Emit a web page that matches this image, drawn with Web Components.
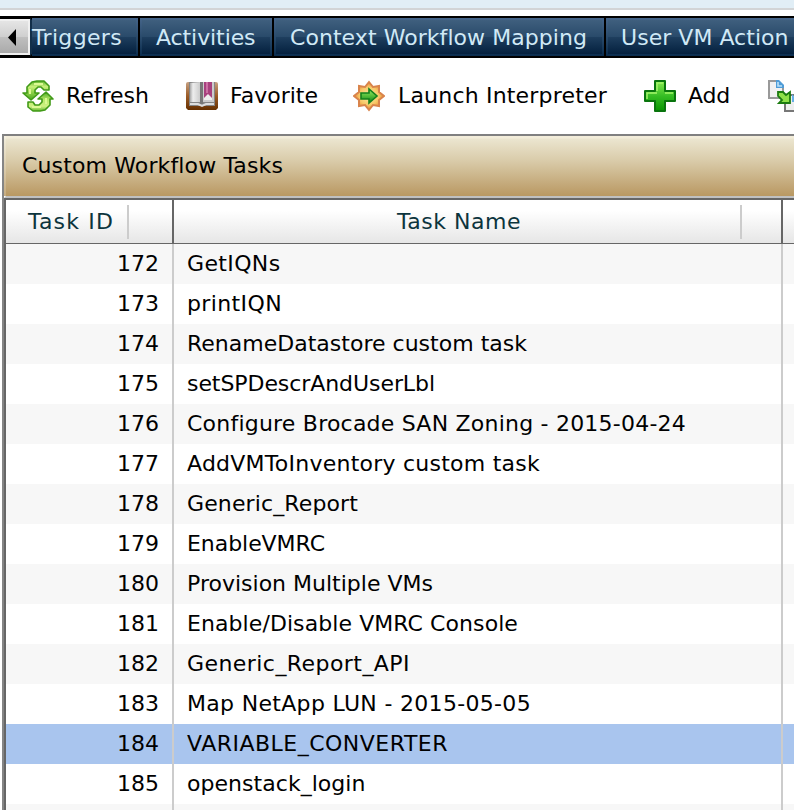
<!DOCTYPE html>
<html lang="en"><head><meta charset="utf-8"><title>Custom Workflow Tasks</title>
<style>html,body{margin:0;height:100%;overflow:hidden;background:#fff}</style></head><body>
<workflow-page></workflow-page>
<script>
// Single-line label whose tracking is adjusted to occupy the given width.
class FitLabel extends HTMLElement{
 connectedCallback(){
  const r=this.attachShadow({mode:'open'});
  r.innerHTML='<style>:host{display:inline-block;white-space:pre;line-height:30px;flex:none}span{display:inline-block}</style><span></span>';
  const s=r.querySelector('span');s.textContent=this.getAttribute('text');
  const w=+this.getAttribute('w');
  if(w){s.style.letterSpacing=((w-s.getBoundingClientRect().width)/s.textContent.length)+'px';this.style.width=w+'px';}
 }}
class ToolIcon extends HTMLElement{
 connectedCallback(){
  const art={
  refresh:`<defs><linearGradient id="g" x2="0" y2="1"><stop stop-color="#5fb52d"/><stop offset=".3" stop-color="#c9f07a"/><stop offset=".6" stop-color="#8fd24a"/><stop offset="1" stop-color="#4ca823"/></linearGradient><linearGradient id="h" x2="0" y2="1"><stop stop-color="#4ca823"/><stop offset=".4" stop-color="#b5e868"/><stop offset=".75" stop-color="#d0f283"/><stop offset="1" stop-color="#62b82f"/></linearGradient></defs><g stroke="#419a18" stroke-width="1.6" stroke-linejoin="round"><path fill="url(#g)" d="M5 13V7l5-5 5-1h7l5 5v4h-5l-3-3h-3l-3 3v3h4l-8 7-8-7z"/><path fill="url(#h)" d="M28 19v6l-5 5-5 1h-7l-5-4v-5h5l2 3h4l3-3v-3h-4l8-7 7 7z"/></g><path d="M12 4h9M8 9v5M24 18v6M10 27h9" fill="none" stroke="#dcf994" stroke-width="2"/>`,
  book:`<defs><linearGradient id="b" x2="0" y2="1"><stop stop-color="#c6a183"/><stop offset=".5" stop-color="#9b5b26"/><stop offset="1" stop-color="#663000"/></linearGradient><linearGradient id="p"><stop stop-color="#aaa"/><stop offset=".3" stop-color="#eee"/><stop offset="1" stop-color="#ccc"/></linearGradient></defs><path d="M0 4q0-2 2-2h28q2 0 2 2v24l-2 2H2l-2-2z" fill="url(#b)"/><path d="M3 2h26v24H3z" fill="#858585"/><path d="M4 3l10-1v20H4z" fill="url(#p)"/><path d="M17 2h11v20H17z" fill="#ccc"/><path d="M14 2h3v22h-3z" fill="#777"/><path d="M4 24h8l4 2 4-2h8" stroke="#ddd" fill="none" stroke-width="2"/><path d="M18 14h8v6h-8z" fill="#eee"/><path d="M18 2h8v16l-4-4-4 4z" fill="#a8417e"/><path d="M20 2h2v11h-2z" fill="#cb71a4"/>`,
  launch:`<defs><radialGradient id="s"><stop stop-color="#fff0a8"/><stop offset=".65" stop-color="#f6c766"/><stop offset="1" stop-color="#e78b35"/></radialGradient><linearGradient id="a" x2="0" y2="1"><stop stop-color="#9bea65"/><stop offset=".5" stop-color="#54bd3a"/><stop offset="1" stop-color="#087c17"/></linearGradient></defs><path d="M16 2l4 5 6-1v6l5 4-5 4v6l-6-1-4 5-4-5-6 1v-6l-5-4 5-4V6l6 1z" fill="url(#s)" stroke="#d9844c" stroke-width="2"/><path d="M8 13h8V9l8 7-8 7v-4H8z" fill="url(#a)" stroke="#13811c" stroke-width="1.6"/>`,
  add:`<defs><linearGradient id="g" x2="0" y2="1"><stop stop-color="#8bea51"/><stop offset=".5" stop-color="#36bd24"/><stop offset="1" stop-color="#079500"/></linearGradient></defs><path d="M11 1h10v10h10v10H21v10H11V21H1V11h10z" fill="url(#g)" stroke="#09750d" stroke-width="2" stroke-linejoin="round"/><path d="M13 11V3h6M3 19v-6h10M21 13h8" fill="none" stroke="#a3f56a" stroke-width="1.5"/>`,
  copy:`<path d="M1 1h9l5 5v12H1z" fill="#f1f1f1" stroke="#999" stroke-width="2"/><path d="M8 0h3l5 5v3H8z" fill="#4f9cd8"/><path d="M10 2v4h4" fill="none" stroke="#bce1f7" stroke-width="1.6"/><path d="M17 15h9l5 5v11H17z" fill="#eee" stroke="#777" stroke-width="2"/><path d="M24 14l7 8h-7z" fill="#64aee7"/><path d="M10 12h5l3 3 4-3v11H11l3-3-4-4z" fill="#8fe048" stroke="#1b7b10" stroke-width="1.8"/>`};
  this.attachShadow({mode:'open'}).innerHTML=`<style>:host{display:block;width:32px;height:32px;flex:none}svg{display:block}</style><svg width="32" height="32" viewBox="0 0 32 32">${art[this.getAttribute('name')]}</svg>`;
 }}
class TabItem extends HTMLElement{
 connectedCallback(){this.attachShadow({mode:'open'}).innerHTML=`<style>:host{display:flex;box-sizing:border-box;height:38px;flex:none;border:2px solid transparent;background:linear-gradient(#3f5f7e,#294a6a 50%,#1e3e5e 51%,#04203e) padding-box,linear-gradient(#45658a,#2a4b6c 50%,#0a2c4e) border-box;color:#d0e9f6;padding-top:3px}</style><slot></slot>`;}}
class TabStrip extends HTMLElement{
 connectedCallback(){this.attachShadow({mode:'open'}).innerHTML=`<style>:host{display:flex;box-sizing:border-box;height:42px;background:#000;padding:2px 0;gap:2px;overflow:hidden}
 .back{box-sizing:border-box;flex:none;width:30px;height:36px;margin-top:1px;border:2px solid #f0f0f0;border-left:0;background:linear-gradient(#e5e5e5,#cfcfcf 50%,#bfbfbf 51%,#aaa)}.back svg{display:block}
 tab-item{padding-left:14px;width:132px}tab-item:first-of-type{width:108px;margin-left:-2px;border-left:2px solid #122f49;padding-left:0}tab-item:nth-of-type(3){width:330px;padding-left:14px}tab-item:nth-of-type(4){width:200px;padding-left:13px}</style>
 <div class="back"><svg width="28" height="32"><path d="M16 8v17L8 16.5z"/></svg></div><tab-item><fit-label text="Triggers" w="90"></fit-label></tab-item><tab-item><fit-label text="Activities" w="99.5"></fit-label></tab-item><tab-item><fit-label text="Context Workflow Mapping" w="297"></fit-label></tab-item><tab-item><fit-label text="User VM Action" w="167.5"></fit-label></tab-item>`;}}
class ToolBar extends HTMLElement{
 connectedCallback(){const x=(n,t,w,g,m)=>`<div style="gap:${g}px;margin-left:${m}px"><tool-icon name="${n}"></tool-icon>${t?`<fit-label text="${t}" w="${w}"></fit-label>`:''}</div>`;
 this.attachShadow({mode:'open'}).innerHTML=`<style>:host{display:flex;height:76px;align-items:center;overflow:hidden}div{display:flex;flex:none;align-items:center}</style>`+x('refresh','Refresh',83,12,22)+x('book','Favorite',88,12,37)+x('launch','Launch Interpreter',209,13,35)+x('add','Add',42,12,37)+x('copy','',0,0,38);}}
class TaskRow extends HTMLElement{
 connectedCallback(){this.attachShadow({mode:'open'}).innerHTML=`<style>:host{display:grid;grid-template-columns:168px 609px 1fr;height:40px;background:var(--row,#fff);align-items:center}
 div{box-sizing:border-box;height:40px;display:flex;align-items:center;border-right:2px solid #ccc}.id{justify-content:flex-end;padding-right:13px}.name{padding-left:13px}</style><div class="id"><fit-label text="${this.getAttribute('num')}" w="42"></fit-label></div><div class="name"><fit-label text="${this.getAttribute('name')}" w="${this.getAttribute('w')}"></fit-label></div>`;}}
class TaskTable extends HTMLElement{
 connectedCallback(){const d=[['GetIQNs',93.5],['printIQN',95],['RenameDatastore custom task',340],['setSPDescrAndUserLbl',248],['Configure Brocade SAN Zoning - 2015-04-24',499],['AddVMToInventory custom task',353],['Generic_Report',171],['EnableVMRC',138],['Provision Multiple VMs',246],['Enable/Disable VMRC Console',331],['Generic_Report_API',223],['Map NetApp LUN - 2015-05-05',344],['VARIABLE_CONVERTER',261],['openstack_login',178.5]];
 this.attachShadow({mode:'open'}).innerHTML=`<style>:host{display:block;border-left:2px solid #666;border-top:2px solid #666}
 header{display:grid;grid-template-columns:168px 609px 1fr;height:44px;box-sizing:border-box;border-bottom:1px solid #666;background:linear-gradient(#fff 25%,#e6e6e6);color:#0c343d}
 .h{display:flex;box-sizing:border-box;height:44px;border-right:2px solid #666;padding-top:7px}.h:first-child{padding-left:22px}.h:nth-child(2){padding-left:223px}i{display:block;width:2px;height:34px;background:#ccc;margin-top:-2px;margin-left:13px}.h:nth-child(2) i{margin-left:219px}
 task-row:nth-of-type(odd){--row:#f7f7f7}task-row.sel{--row:#a9c5ee}</style><header><div class="h"><fit-label text="Task ID" w="86"></fit-label><i></i></div><div class="h"><fit-label text="Task Name" w="124"></fit-label><i></i></div></header>`+d.map((r,i)=>`<task-row num="${172+i}" name="${r[0]}" w="${r[1]}" ${i==12?'class="sel"':''}></task-row>`).join('')+'<task-row num="" name="" w="0"></task-row>';}}
class TaskPanel extends HTMLElement{
 connectedCallback(){this.attachShadow({mode:'open'}).innerHTML=`<style>:host{display:block;margin-left:2px;border-left:2px solid #858585;border-top:2px solid #808080}
 .title{box-sizing:border-box;height:62px;border-bottom:2px solid #c0c0c0;border-left:2px solid #ffffff30;padding:15px 0 0 16px;background:linear-gradient(#f3edda 0 2px,#ebe5cf 3px,#d9cba9 25px,#b99862 60px)}</style><div class="title"><fit-label text="Custom Workflow Tasks" w="261"></fit-label></div><task-table></task-table>`;}}
class WorkflowPage extends HTMLElement{
 connectedCallback(){this.attachShadow({mode:'open'}).innerHTML=`<style>:host{display:block;width:794px;height:810px;overflow:hidden;background:#fff;color:#000;font:22px "DejaVu Sans",Verdana,sans-serif}.top{height:8px;background:#e1eef6;border-bottom:2px solid #d2d4d6;margin-bottom:6px}</style><div class="top"></div><tab-strip></tab-strip><tool-bar></tool-bar><task-panel></task-panel>`;}}
for(const [n,c] of Object.entries({'fit-label':FitLabel,'tool-icon':ToolIcon,'tab-item':TabItem,'tab-strip':TabStrip,'tool-bar':ToolBar,'task-row':TaskRow,'task-table':TaskTable,'task-panel':TaskPanel,'workflow-page':WorkflowPage}))customElements.define(n,c);
</script></body></html>
